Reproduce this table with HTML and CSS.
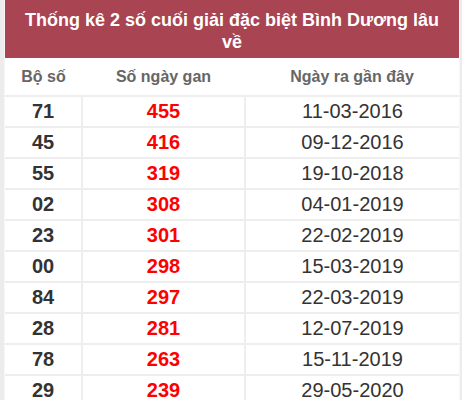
FILE: index.html
```html
<!DOCTYPE html>
<html lang="vi">
<head>
<meta charset="utf-8">
<link rel="stylesheet" href="styles.css">
</head>
<body>
<div class="box">
  <div class="title">Thống kê 2 số cuối giải đặc biệt Bình Dương lâu về</div>
  <table class="stats">
    <thead>
      <tr><th class="c1">Bộ số</th><th class="c2">Số ngày gan</th><th class="c3">Ngày ra gần đây</th></tr>
    </thead>
    <tbody>
      <tr><td class="num">71</td><td class="gan">455</td><td class="date">11-03-2016</td></tr>
      <tr><td class="num">45</td><td class="gan">416</td><td class="date">09-12-2016</td></tr>
      <tr><td class="num">55</td><td class="gan">319</td><td class="date">19-10-2018</td></tr>
      <tr><td class="num">02</td><td class="gan">308</td><td class="date">04-01-2019</td></tr>
      <tr><td class="num">23</td><td class="gan">301</td><td class="date">22-02-2019</td></tr>
      <tr><td class="num">00</td><td class="gan">298</td><td class="date">15-03-2019</td></tr>
      <tr><td class="num">84</td><td class="gan">297</td><td class="date">22-03-2019</td></tr>
      <tr><td class="num">28</td><td class="gan">281</td><td class="date">12-07-2019</td></tr>
      <tr><td class="num">78</td><td class="gan">263</td><td class="date">15-11-2019</td></tr>
      <tr><td class="num">29</td><td class="gan">239</td><td class="date">29-05-2020</td></tr>
    </tbody>
  </table>
</div>
</body>
</html>
```
FILE: styles.css
```css
html, body {
  margin: 0;
  padding: 0;
  background: #ececec;
  font-family: "Liberation Sans", Arial, sans-serif;
}
body {
  padding: 0 2px 0 4px;
}
.box {
  background: #fff;
  border-left: 1px solid #f7f7f7;
  border-right: 1px solid #f7f7f7;
}
.title {
  background: #a94452;
  color: #fff;
  font-weight: bold;
  font-size: 18px;
  line-height: 22px;
  text-align: center;
  padding: 9px 8px 5px;
}
.stats {
  width: 100%;
  border-collapse: collapse;
  table-layout: fixed;
}
.stats th {
  color: #666;
  font-weight: bold;
  font-size: 16px;
  height: 37px;
  padding: 0;
  text-align: center;
  border-bottom: 2px solid #eee;
}
.c1 { width: 77px; }
.c2 { width: 163px; }
.stats td {
  height: 29px;
  padding: 0;
  text-align: center;
  font-size: 20px;
  color: #333;
  border-bottom: 2px solid #eee;
  border-right: 2px solid #eee;
}
.stats td:last-child { border-right: 0; }
.num { font-weight: bold; }
.gan { font-weight: bold; color: #f00 !important; }
```
